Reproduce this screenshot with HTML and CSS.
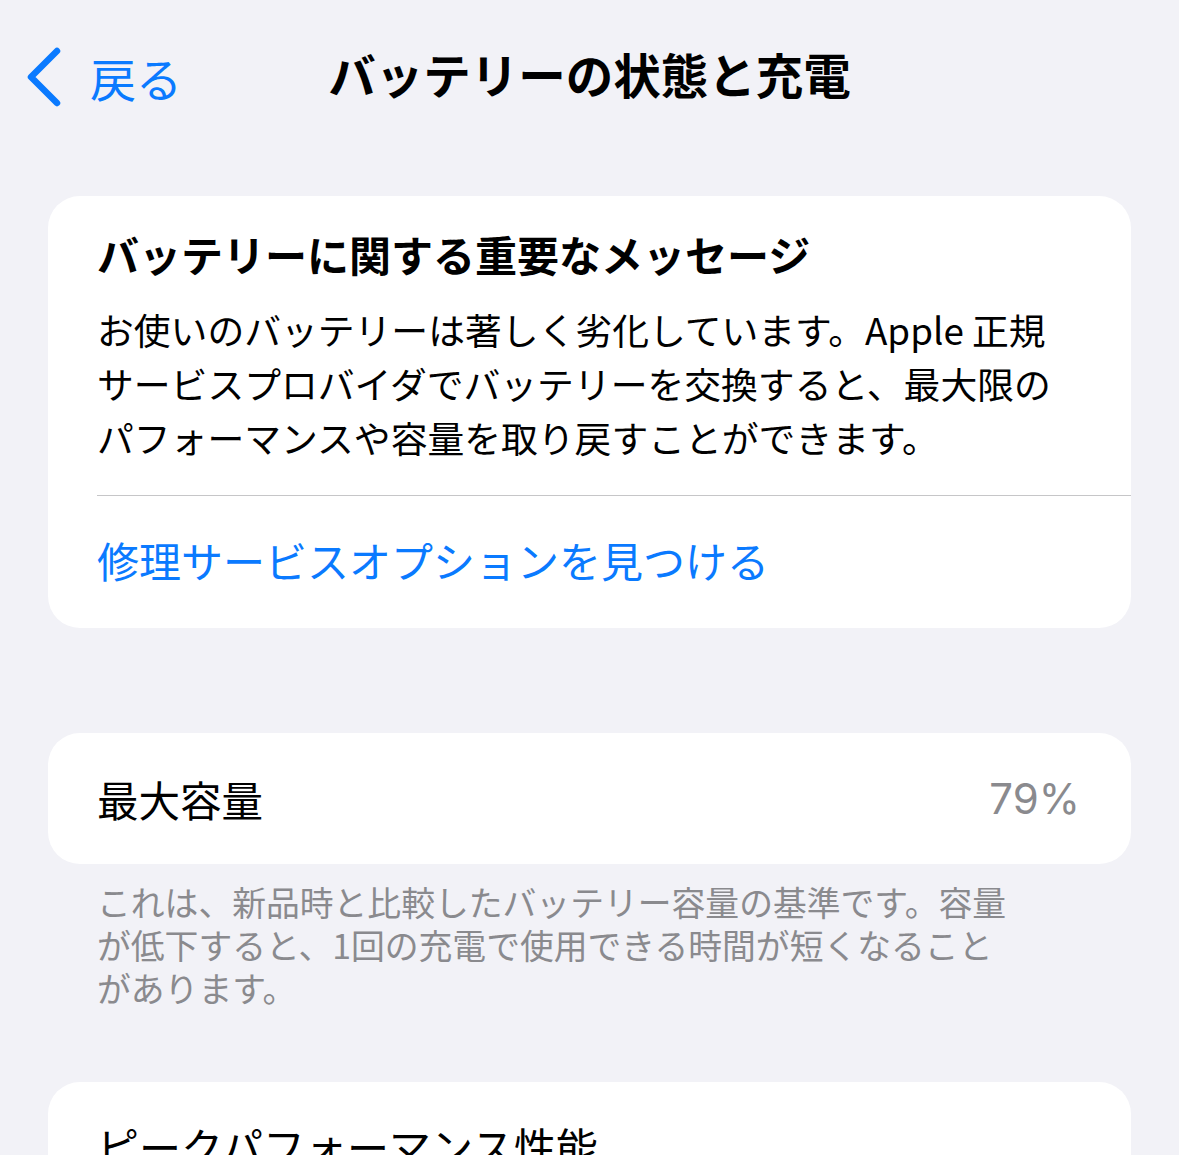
FILE: index.html
```html
<!DOCTYPE html>
<html lang="ja">
<head>
<meta charset="utf-8">
<link rel="stylesheet" href="styles.css">
</head>
<body>
<div class="page">
  <header class="nav">
    <div class="back">
      <svg class="chev" width="40" height="62" viewBox="0 0 40 62"><path d="M31 5 L5 31 L31 57" fill="none" stroke="#0A7AFF" stroke-width="6.5" stroke-linecap="round" stroke-linejoin="round"/></svg>
      <span class="back-text">戻る</span>
    </div>
    <h1 class="title">バッテリーの状態と充電</h1>
  </header>

  <section class="card card-msg">
    <div class="msg-body">
      <h2 class="msg-title">バッテリーに関する重要なメッセージ</h2>
      <p class="msg-text">お使いのバッテリーは著しく劣化しています。Apple 正規<br>サービスプロバイダでバッテリーを交換すると、最大限の<br>パフォーマンスや容量を取り戻すことができます。</p>
    </div>
    <div class="sep"></div>
    <div class="link">修理サービスオプションを見つける</div>
  </section>

  <section class="card card-row">
    <span class="row-label">最大容量</span>
    <span class="row-value">79%</span>
  </section>
  <p class="footnote">これは、新品時と比較したバッテリー容量の基準です。容量<br>が低下すると、1回の充電で使用できる時間が短くなること<br>があります。</p>

  <section class="card card-peak">
    <h2 class="peak-title">ピークパフォーマンス性能</h2>
  </section>
</div>
</body>
</html>
```
FILE: styles.css
```css
html, body {
  margin: 0;
  padding: 0;
  background: #F2F2F7;
  height: 1155px;
  overflow: hidden;
}
body {
  font-family: "Noto Sans CJK JP", "Noto Sans", sans-serif;
  color: #000;
}
.page {
  display: flex;
  flex-direction: column;
}
.nav {
  position: relative;
  height: 150px;
  display: flex;
  align-items: flex-start;
}
.back {
  display: flex;
  align-items: center;
  margin-top: 46px;
  margin-left: 26px;
  gap: 24px;
}
.chev { display: block; }
.back-text {
  color: #0A7AFF;
  font-size: 46px;
  line-height: 60px;
}
.title {
  position: absolute;
  left: 0;
  right: 0;
  top: 44px;
  margin: 0;
  text-align: center;
  font-size: 47.5px;
  line-height: 60px;
  font-weight: 700;
  padding-left: 0;
}
.card {
  background: #fff;
  margin: 0 48px;
  border-radius: 32px;
}
.card-msg {
  margin-top: 46px;
  height: 432px;
  box-sizing: border-box;
  padding-top: 28px;
}
.msg-body {
  padding: 0 49px;
}
.msg-title {
  margin: 0;
  font-size: 42px;
  line-height: 60px;
  font-weight: 700;
}
.msg-text {
  margin: 18px 0 0 0;
  font-size: 36.8px;
  line-height: 54px;
}
.sep {
  margin-top: 31px;
  margin-left: 49px;
  height: 1px;
  background: #C6C6C8;
}
.link {
  padding-left: 49px;
  margin-top: 34px;
  color: #0A7AFF;
  font-size: 42px;
  line-height: 60px;
}
.card-row {
  margin-top: 105px;
  height: 131px;
  display: flex;
  align-items: center;
  justify-content: space-between;
  padding: 0 49px;
}
.row-label {
  font-size: 41.5px;
  line-height: 60px;
}
.row-value {
  font-size: 42px;
  line-height: 60px;
  color: #8A8A8E;
  font-family: "Inter", "Noto Sans", sans-serif;
  margin-right: 2px;
}
.footnote {
  margin: 16px 48px 0 97px;
  font-size: 33.8px;
  line-height: 43px;
  color: #8A8A8E;
}
.card-peak {
  margin-top: 73px;
  height: 200px;
  box-sizing: border-box;
  padding: 34px 49px 0;
}
.peak-title {
  margin: 0;
  font-size: 42px;
  line-height: 60px;
  font-weight: 400;
}
```
